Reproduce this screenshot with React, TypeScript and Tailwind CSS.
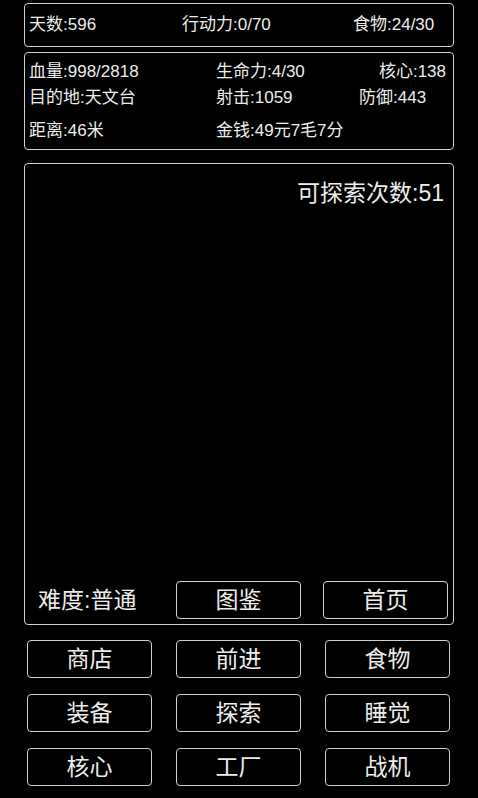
// 游戏主界面：顶部状态栏、角色属性面板、探索区与操作按钮

const font = { fontFamily: '"Liberation Sans", "Noto Sans CJK SC", sans-serif' };

const actions = ['商店', '前进', '食物', '装备', '探索', '睡觉', '核心', '工厂', '战机'];

function Btn({ label }: { label: string }) {
  return (
    <div className="h-[38px] flex items-center justify-center rounded-[4px] border-[1.5px] border-[#cfcfcf] text-[23px] text-[#ececec]">
      {label}
    </div>
  );
}

export default function App() {
  return (
    <div className="w-[478px] h-[798px] bg-black text-[#ececec] overflow-hidden" style={font}>
      {/* 状态栏 */}
      <div className="mx-[24px] mt-[3px] h-[44px] rounded-[4px] border-[1.5px] border-[#cfcfcf] flex items-center text-[17px] pl-[4px]">
        <span className="w-[153px]">天数:596</span>
        <span className="w-[171px]">行动力:0/70</span>
        <span>食物:24/30</span>
      </div>

      {/* 属性面板 */}
      <div className="mx-[24px] mt-[5px] h-[98px] rounded-[4px] border-[1.5px] border-[#cfcfcf] text-[17px] pl-[4px] pr-[7px] pt-[6px]">
        <div className="flex h-[25px] items-center">
          <span className="w-[187px]">血量:998/2818</span>
          <span className="flex-1">生命力:4/30</span>
          <span>核心:138</span>
        </div>
        <div className="flex h-[28px] items-center">
          <span className="w-[187px]">目的地:天文台</span>
          <span className="w-[143px]">射击:1059</span>
          <span>防御:443</span>
        </div>
        <div className="flex h-[38px] items-center">
          <span className="w-[187px]">距离:46米</span>
          <span>金钱:49元7毛7分</span>
        </div>
      </div>

      {/* 探索区 */}
      <div className="mx-[24px] mt-[13px] h-[462px] rounded-[4px] border-[1.5px] border-[#cfcfcf] flex flex-col pb-[5px]">
        <div className="text-right text-[23px] pr-[9px] pt-[12px]">可探索次数:51</div>
        <div className="flex-1" />
        <div className="flex items-center pl-[13px] pr-[4px]">
          <span className="w-[138px] text-[23px]">难度:普通</span>
          <div className="w-[125px]"><Btn label="图鉴" /></div>
          <div className="w-[125px] ml-[22px]"><Btn label="首页" /></div>
        </div>
      </div>

      {/* 操作按钮 */}
      <div className="ml-[27px] mr-[28px] mt-[15px] grid grid-cols-3 gap-x-[24px] gap-y-[16px]">
        {actions.map((a) => (
          <Btn key={a} label={a} />
        ))}
      </div>
    </div>
  );
}
